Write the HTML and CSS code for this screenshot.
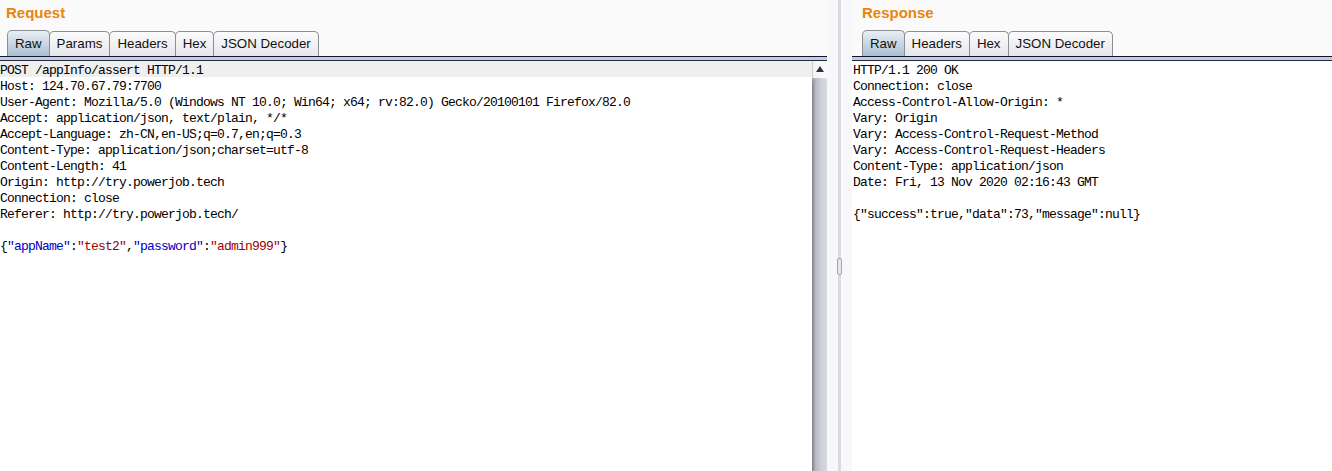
FILE: index.html
```html
<!DOCTYPE html>
<html lang="en">

<head>
    <meta charset="UTF-8">
    <meta name="viewport" content="width=device-width, initial-scale=1.0">
    <title>Request / Response</title>
    <link rel="stylesheet" href="styles.css">
</head>

<body>
    <div class="app">
        <section class="pane pane-request">
            <h2 class="pane-title">Request</h2>
            <ul class="tabs">
                <li class="tab active">Raw</li>
                <li class="tab">Params</li>
                <li class="tab">Headers</li>
                <li class="tab">Hex</li>
                <li class="tab">JSON Decoder</li>
            </ul>
            <div class="editor">
                <div class="editor-text">
                    <div class="line current">POST /appInfo/assert HTTP/1.1</div>
                    <div class="line">Host: 124.70.67.79:7700</div>
                    <div class="line">User-Agent: Mozilla/5.0 (Windows NT 10.0; Win64; x64; rv:82.0) Gecko/20100101 Firefox/82.0</div>
                    <div class="line">Accept: application/json, text/plain, */*</div>
                    <div class="line">Accept-Language: zh-CN,en-US;q=0.7,en;q=0.3</div>
                    <div class="line">Content-Type: application/json;charset=utf-8</div>
                    <div class="line">Content-Length: 41</div>
                    <div class="line">Origin: http://try.powerjob.tech</div>
                    <div class="line">Connection: close</div>
                    <div class="line">Referer: http://try.powerjob.tech/</div>
                    <div class="line"></div>
                    <div class="line">{<span class="key">"appName"</span>:<span class="str">"test2"</span>,<span class="key">"password"</span>:<span class="str">"admin999"</span>}</div>
                </div>
                <div class="scrollbar">
                    <div class="scroll-btn"></div>
                    <div class="scroll-thumb"></div>
                </div>
            </div>
        </section>

        <div class="splitter">
            <div class="splitter-line">
                <span class="grip"></span>
            </div>
        </div>

        <section class="pane pane-response">
            <h2 class="pane-title">Response</h2>
            <ul class="tabs">
                <li class="tab active">Raw</li>
                <li class="tab">Headers</li>
                <li class="tab">Hex</li>
                <li class="tab">JSON Decoder</li>
            </ul>
            <div class="editor">
                <div class="editor-text">
                    <div class="line">HTTP/1.1 200 OK</div>
                    <div class="line">Connection: close</div>
                    <div class="line">Access-Control-Allow-Origin: *</div>
                    <div class="line">Vary: Origin</div>
                    <div class="line">Vary: Access-Control-Request-Method</div>
                    <div class="line">Vary: Access-Control-Request-Headers</div>
                    <div class="line">Content-Type: application/json</div>
                    <div class="line">Date: Fri, 13 Nov 2020 02:16:43 GMT</div>
                    <div class="line"></div>
                    <div class="line">{"success":true,"data":73,"message":null}</div>
                </div>
            </div>
        </section>
    </div>
</body>

</html>
```

FILE: styles.css
```css
* {
    padding: 0;
    margin: 0;
    box-sizing: border-box;
}

body {
    background-color: #fafafa;
    font-family: "Liberation Sans", Arial, sans-serif;
    overflow: hidden;
}

.app {
    display: flex;
    height: 471px;
}

.pane {
    display: flex;
    flex-direction: column;
}

.pane-request {
    width: 827px;
}

.pane-response {
    flex: 1;
}

.pane-title {
    height: 30px;
    padding: 4px 0 0 6px;
    font-size: 15px;
    line-height: 18px;
    font-weight: bold;
    color: #e8860c;
}

.tabs {
    display: flex;
    align-items: flex-end;
    height: 26px;
    padding-left: 7px;
    list-style: none;
}

.pane-response .pane-title {
    padding-left: 10px;
}

.pane-response .tabs {
    padding-left: 10px;
}

.tab {
    height: 25px;
    padding: 0 7px;
    margin-right: -1px;
    font-size: 13.3px;
    line-height: 24px;
    color: #111;
    border: 1px solid #8c8e95;
    border-bottom: none;
    border-radius: 5px 5px 0 0;
    background: linear-gradient(#fbfbfc, #e6e7ea);
}

.tab.active {
    height: 26px;
    line-height: 25px;
    background: linear-gradient(#e9eff4, #a9bfd2);
}

.editor {
    flex: 1;
    display: flex;
    min-height: 0;
    background-color: #fff;
    border-top: 1px solid #14142a;
    box-shadow: inset 0 3px 0 #bcd0e4, inset 0 4px 0 #2a2a3a;
    padding-top: 4px;
}

.editor-text {
    flex: 1;
    font-family: "Liberation Mono", "Courier New", monospace;
    font-size: 13px;
    letter-spacing: -0.8px;
    line-height: 16px;
    color: #000;
    overflow: hidden;
}

.pane-response .editor-text {
    padding-left: 1px;
}

.line {
    height: 16px;
    padding-top: 2px;
    white-space: pre;
}

.line.current {
    background-color: #efefef;
}

.key {
    color: #0000c0;
}

.str {
    color: #a00000;
}

.scrollbar {
    width: 15px;
    display: flex;
    flex-direction: column;
    background: linear-gradient(to right, #9a9ca4, #d3d4dc 40%, #dcdde3);
}

.scroll-btn {
    position: relative;
    height: 17px;
    background: linear-gradient(to right, #f4f4f6, #fbfbfc);
    border-left: 1px solid #d0d1d8;
}

.scroll-btn::after {
    content: "";
    position: absolute;
    left: 3px;
    top: 5px;
    border-bottom: 6px solid #333;
    border-left: 4px solid transparent;
    border-right: 4px solid transparent;
}

.scroll-thumb {
    flex: 1;
    border-radius: 7px 7px 0 0;
    background: linear-gradient(to right, #7e8088, #b8bac4 25%, #d0d2da 65%, #d8d9e0);
}

.splitter {
    width: 25px;
    padding-left: 11px;
    background-color: #f8f8fa;
}

.splitter-line {
    position: relative;
    width: 3px;
    height: 100%;
    background-color: #d9dae2;
}

.grip {
    position: absolute;
    left: -1px;
    top: 258px;
    width: 5px;
    height: 17px;
    border: 1px solid #a3a5ad;
    border-radius: 2px;
    background-color: #e6e7ec;
}
```
